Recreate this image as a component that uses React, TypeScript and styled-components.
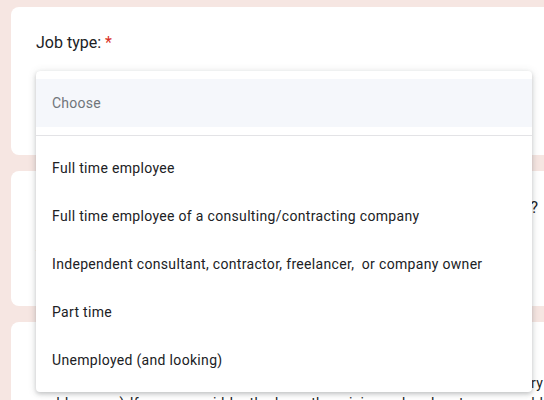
import styled, { createGlobalStyle } from 'styled-components';

const GlobalStyle = createGlobalStyle`
	html, body {
		margin: 0;
		padding: 0;
		background: #f6e6e2;
		overflow: hidden;
	}
	body {
		font-family: Roboto, 'Noto Sans', Arial, sans-serif;
		color: #202124;
	}
`;

const options = [
	'Full time employee',
	'Full time employee of a consulting/contracting company',
	'Independent consultant, contractor, freelancer,\u00a0 or company owner',
	'Part time',
	'Unemployed (and looking)',
];

const App = () => {
	return (
		<>
			<GlobalStyle />
			<Page>
				<Card>
					<Question>
						Job type: <Required>*</Required>
					</Question>
					<SelectBox />
					<Menu>
						<Placeholder>Choose</Placeholder>
						<Divider />
						{options.map(option => (
							<Option key={option}>{option}</Option>
						))}
					</Menu>
				</Card>
				<Card $height={135}>
					<EndAlignedQuestion>
						<span>What is your approximate total yearly compensation in US dollars?</span>
					</EndAlignedQuestion>
					<Answer>Your answer</Answer>
				</Card>
				<Card $height={120}>
					<Question>
						Desired compensation <Required>*</Required>
					</Question>
					<Description>
						Please give us an estimate of the total compensation you would like (salary and
						bonuses) If you are paid by the hour, the minimum hourly rate you would take.
					</Description>
				</Card>
			</Page>
		</>
	);
};

const Page = styled.div`
	display: flex;
	flex-direction: column;
	gap: 16px;
	padding: 7px 0 0 11px;
	width: 700px;
`;

const Card = styled.div<{ $height?: number }>`
	position: relative;
	box-sizing: border-box;
	background: #ffffff;
	border-radius: 8px;
	padding: 24px 25px;
	height: ${p => (p.$height ? `${p.$height}px` : '148px')};
`;

const Question = styled.div`
	font-size: 16px;
	line-height: 24px;
	white-space: nowrap;
	color: #202124;
`;

const EndAlignedQuestion = styled(Question)`
	display: flex;
	justify-content: flex-end;
	width: 502px;
	margin-top: 1px;
	overflow: hidden;
`;

const Required = styled.span`
	color: #d93025;
`;

const SelectBox = styled.div`
	margin-top: 16px;
	height: 56px;
	width: 200px;
	border: 1px solid #dadce0;
	border-radius: 4px;
	box-sizing: border-box;
`;

const Menu = styled.div`
	position: absolute;
	top: 64px;
	left: 25px;
	width: 496px;
	box-sizing: border-box;
	padding: 8px 0;
	background: #ffffff;
	border-radius: 4px;
	box-shadow:
		0 2px 4px rgba(60, 64, 67, 0.25),
		0 1px 10px rgba(60, 64, 67, 0.12);
	z-index: 10;
`;

const Placeholder = styled.div`
	height: 48px;
	display: flex;
	align-items: center;
	padding: 0 16px;
	background: #f5f7fb;
	font-size: 14px;
	color: #70757a;
	letter-spacing: 0.25px;
`;

const Divider = styled.div`
	height: 1px;
	background: #e3e3e6;
	margin: 8px 0;
`;

const Option = styled.div`
	height: 48px;
	display: flex;
	align-items: center;
	padding: 0 16px;
	font-size: 14px;
	color: #202124;
	letter-spacing: 0.32px;
	white-space: nowrap;
`;

const Answer = styled.div`
	margin-top: 24px;
	width: 300px;
	font-size: 14px;
	line-height: 24px;
	color: #70757a;
	border-bottom: 1px solid #dadce0;
`;

const Description = styled.div`
	margin-top: 3px;
	width: 507px;
	font-size: 14px;
	line-height: 20px;
	text-align: justify;
	letter-spacing: 0.2px;
	color: #202124;
`;

export default App;
